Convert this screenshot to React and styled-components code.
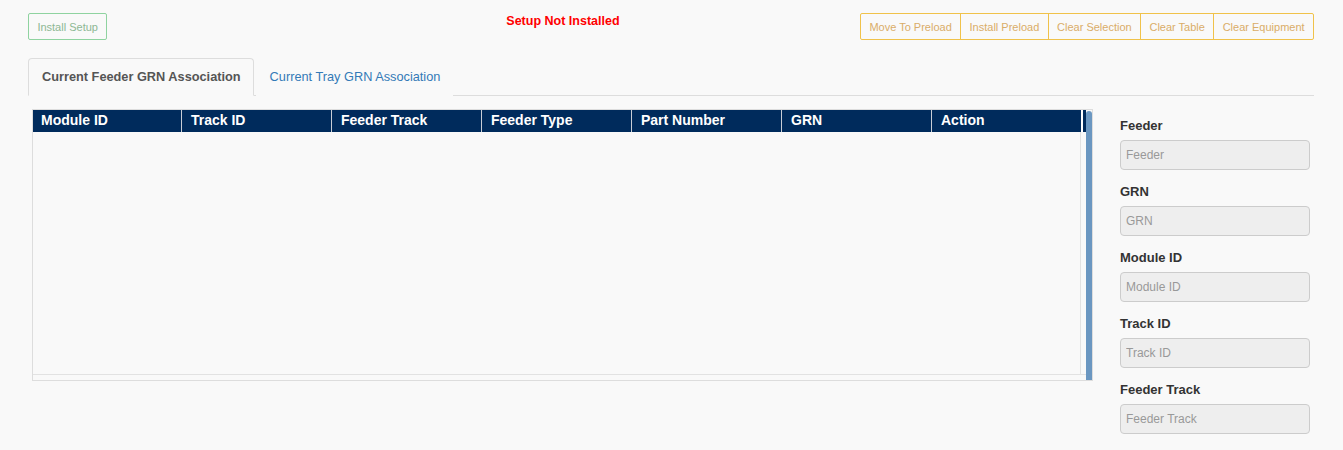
import React from "react";
import styled, { createGlobalStyle } from "styled-components";

const GlobalStyle = createGlobalStyle`
    body {
        margin: 0;
        background: #f9f9f9;
        font-family: "Liberation Sans", Arial, sans-serif;
    }
`;

const Page = styled.div`
    padding: 13px 29px 0 28px;
    height: 450px;
    box-sizing: border-box;
    overflow: hidden;
`;

// top toolbar
const Toolbar = styled.div`
    display: flex;
    align-items: flex-start;
`;

const OutlineButton = styled.button`
    height: 27px;
    padding: 0 8.4px;
    font-family: inherit;
    font-size: 11px;
    background: transparent;
    cursor: pointer;
    border: 1px solid ${props => props.color === "green" ? "#8fd3a0" : "#f0c24a"};
    color: ${props => props.color === "green" ? "#8db894" : "#d9ad68"};
    border-radius: 2px;
`;

const Status = styled.div`
    margin-left: 399px;
    margin-top: 1px;
    font-size: 12.5px;
    font-weight: bold;
    color: #ff0000;
    line-height: 14px;
`;

const ButtonGroup = styled.div`
    display: flex;
    margin-left: auto;

    & > button {
        border-radius: 0;
        margin-left: -1px;
    }
    & > button:first-child {
        border-radius: 2px 0 0 2px;
        margin-left: 0;
    }
    & > button:last-child {
        border-radius: 0 2px 2px 0;
    }
`;

// tabs
const Tabs = styled.div`
    display: flex;
    margin-top: 18px;
    border-bottom: 1px solid #dddddd;
    height: 37px;
`;

const Tab = styled.div`
    padding: 0 12px 0 13px;
    margin-right: 2px;
    line-height: 36px;
    font-size: 12.75px;
    border: 1px solid ${props => props.active ? "#dddddd" : "transparent"};
    border-bottom-color: ${props => props.active ? "#f9f9f9" : "transparent"};
    border-radius: 4px 4px 0 0;
    color: ${props => props.active ? "#555555" : "#337ab7"};
    font-weight: ${props => props.active ? "bold" : "normal"};
    margin-bottom: -1px;
    background: #f9f9f9;
`;

// main area
const Main = styled.div`
    display: flex;
    margin-top: 13px;
`;

const TableFrame = styled.div`
    margin-left: 4px;
    width: 1061px;
    height: 272px;
    border: 1px solid #dddddd;
    box-sizing: border-box;
    display: flex;
`;

const TableArea = styled.div`
    width: 1053px;
    display: flex;
    flex-direction: column;
`;

const HeaderRow = styled.div`
    display: flex;
    height: 22px;
    background: #002b5c;
`;

const HeaderCell = styled.div`
    width: 150px;
    border-right: 1px solid #c9ced6;
    padding-left: 9px;
    box-sizing: border-box;
    color: #ffffff;
    font-size: 14px;
    font-weight: bold;
    line-height: 21px;
    flex-shrink: 0;
    &:first-child {
        width: 149px;
        padding-left: 8px;
    }
`;

const HeaderGap = styled.div`
    width: 2px;
    background: #ffffff;
    margin-left: -1px;
`;

const BodyRow = styled.div`
    flex: 1;
    display: flex;
`;

const BodyArea = styled.div`
    width: 1047px;
    border-right: 1px solid #e2e2e2;
    border-bottom: 1px solid #e2e2e2;
`;

const Corner = styled.div`
    flex: 1;
    border-bottom: 1px solid #e2e2e2;
`;

const HScroll = styled.div`
    height: 5px;
`;

const ScrollThumb = styled.div`
    width: 6px;
    margin-top: 1px;
    background: #6b97c1;
    border-radius: 3px 3px 0 0;
`;

// side form
const Side = styled.div`
    margin-left: 27px;
    padding-top: 8px;
    width: 190px;
`;

const Field = styled.div`
    margin-bottom: 13px;
`;

const Label = styled.div`
    font-size: 13px;
    font-weight: bold;
    color: #333333;
    line-height: 18px;
    margin-bottom: 5px;
`;

const Input = styled.input`
    width: 190px;
    height: 30px;
    box-sizing: border-box;
    border: 1px solid #cccccc;
    border-radius: 4px;
    background: #eeeeee;
    padding: 0 5px;
    font-family: inherit;
    font-size: 12px;
    color: #555555;

    &::placeholder {
        color: #999999;
    }
`;

const columns = ["Module ID", "Track ID", "Feeder Track", "Feeder Type", "Part Number", "GRN", "Action"];
const fields = ["Feeder", "GRN", "Module ID", "Track ID", "Feeder Track"];

const App = () => {
    return (
        <Page>
            <GlobalStyle />
            <Toolbar>
                <OutlineButton color="green">Install Setup</OutlineButton>
                <Status>Setup Not Installed</Status>
                <ButtonGroup>
                    <OutlineButton>Move To Preload</OutlineButton>
                    <OutlineButton>Install Preload</OutlineButton>
                    <OutlineButton>Clear Selection</OutlineButton>
                    <OutlineButton>Clear Table</OutlineButton>
                    <OutlineButton>Clear Equipment</OutlineButton>
                </ButtonGroup>
            </Toolbar>

            <Tabs>
                <Tab active>Current Feeder GRN Association</Tab>
                <Tab>Current Tray GRN Association</Tab>
            </Tabs>

            <Main>
                <TableFrame>
                    <TableArea>
                        <HeaderRow>
                            {columns.map(c => <HeaderCell key={c}>{c}</HeaderCell>)}
                            <HeaderGap />
                        </HeaderRow>
                        <BodyRow>
                            <BodyArea />
                            <Corner />
                        </BodyRow>
                        <HScroll />
                    </TableArea>
                    <ScrollThumb />
                </TableFrame>

                <Side>
                    {fields.map(f => (
                        <Field key={f}>
                            <Label>{f}</Label>
                            <Input placeholder={f} readOnly />
                        </Field>
                    ))}
                </Side>
            </Main>
        </Page>
    );
};

export default App;
